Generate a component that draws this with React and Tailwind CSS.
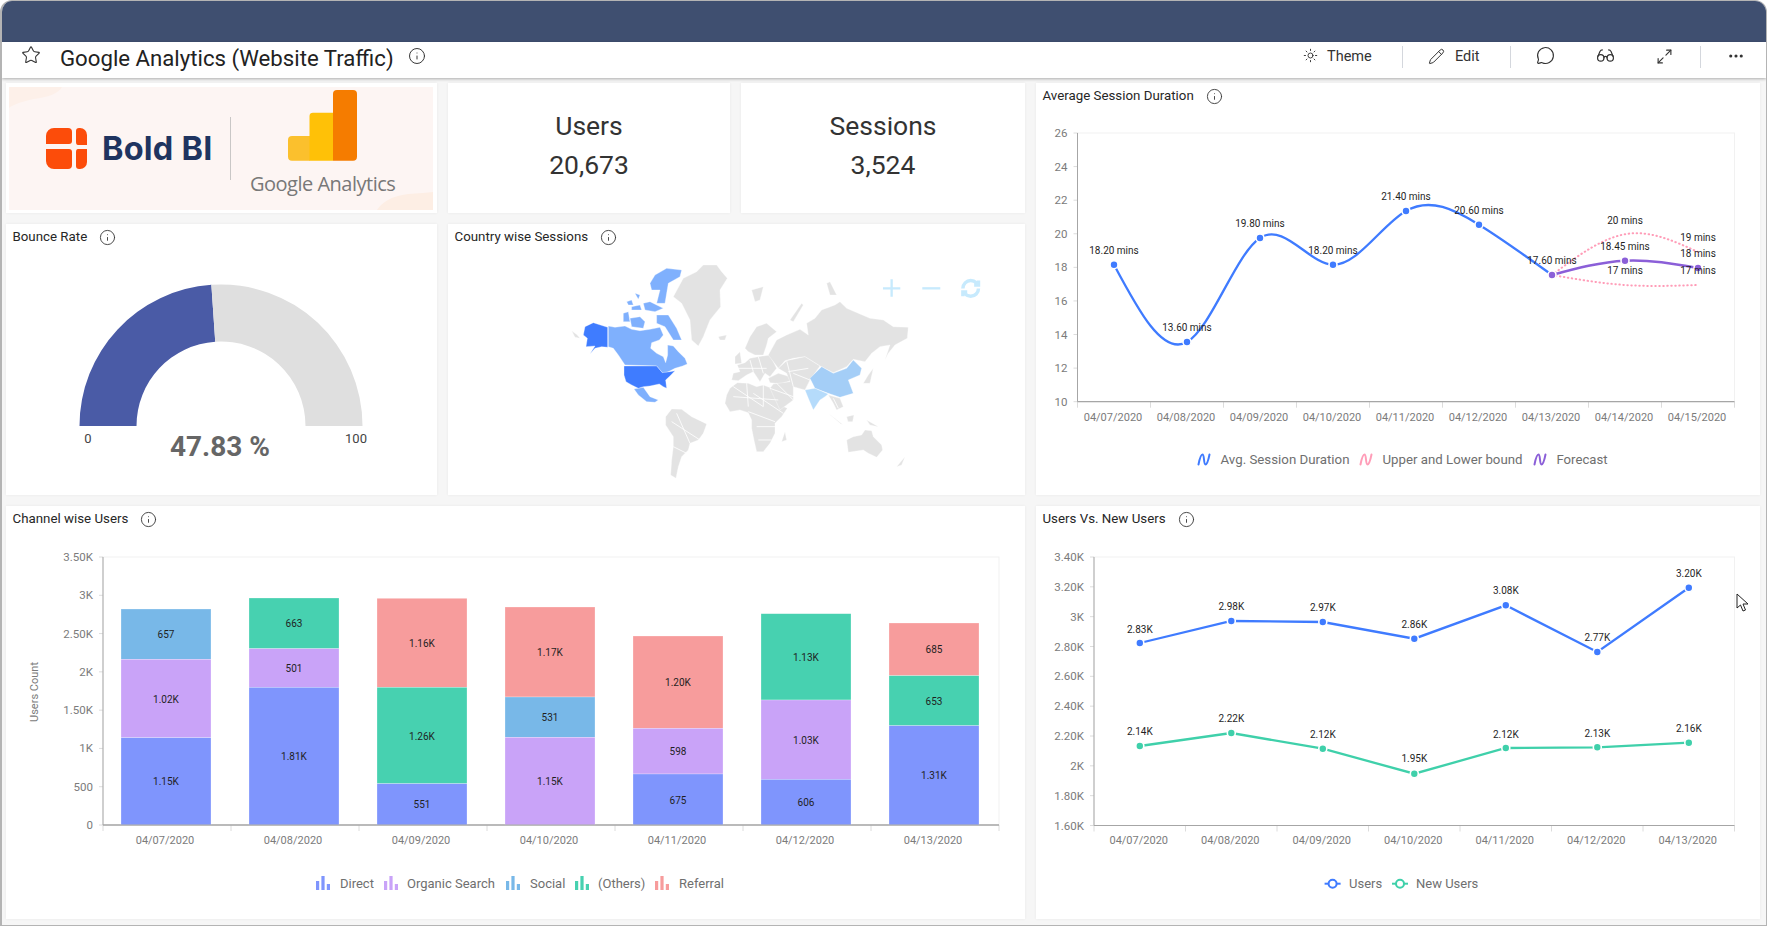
import React from "react";
import { Star, Info, Sun, Pencil, MessageCircle, Glasses, Maximize2, Ellipsis } from "lucide-react";

const AXIS = "#a6a6a6";
const FRAME = "#f1f1f1";
const TICK = "#dcdcdc";
const LABEL = "#7b7b7b";
const LEG = "#6f6f6f";
const BLUE = "#3f7bff";
const GREEN = "#3fd0aa";
const PURPLE = "#8b5fd8";
const PINK = "#ff9db8";
const C = { d: "#7f95fd", o: "#c9a3f8", s: "#78b8e8", t: "#47d1b0", r: "#f79c9c" };

function spline(pts) {
  const n = pts.length - 1;
  const xs = pts.map((p) => p[0]);
  const ys = pts.map((p) => p[1]);
  const h = [];
  for (let i = 0; i < n; i++) h.push(xs[i + 1] - xs[i]);
  const a = new Array(n + 1).fill(0);
  const b = new Array(n + 1).fill(1);
  const c = new Array(n + 1).fill(0);
  const d = new Array(n + 1).fill(0);
  for (let i = 1; i < n; i++) {
    a[i] = h[i - 1];
    b[i] = 2 * (h[i - 1] + h[i]);
    c[i] = h[i];
    d[i] = 6 * ((ys[i + 1] - ys[i]) / h[i] - (ys[i] - ys[i - 1]) / h[i - 1]);
  }
  for (let i = 1; i <= n; i++) {
    const m = a[i] / b[i - 1];
    b[i] -= m * c[i - 1];
    d[i] -= m * d[i - 1];
  }
  const M = new Array(n + 1).fill(0);
  for (let i = n - 1; i >= 0; i--) M[i] = (d[i] - c[i] * M[i + 1]) / b[i];
  let path = `M${xs[0]},${ys[0]}`;
  for (let i = 0; i < n; i++) {
    const c1 = ys[i] + (h[i] / 3) * ((ys[i + 1] - ys[i]) / h[i] - (h[i] * (2 * M[i] + M[i + 1])) / 6);
    const c2 = ys[i + 1] - (h[i] / 3) * ((ys[i + 1] - ys[i]) / h[i] + (h[i] * (M[i] + 2 * M[i + 1])) / 6);
    path += ` C${xs[i] + h[i] / 3},${c1} ${xs[i + 1] - h[i] / 3},${c2} ${xs[i + 1]},${ys[i + 1]}`;
  }
  return path;
}

function Card({ title, className = "", children }) {
  return (
    <div className={`bg-white shadow-[0_0_3px_rgba(0,0,0,0.06)] flex flex-col min-h-0 overflow-hidden ${className}`}>
      {title && (
        <div className="h-[26px] shrink-0 flex items-center pl-[6.5px] gap-[12px] text-[13.3px] text-[#262626]">
          <span>{title}</span>
          <Info size={17} strokeWidth={1.3} className="text-[#3a3a3a]" />
        </div>
      )}
      {children}
    </div>
  );
}

function ChartSvg({ x, y, w, h, children }) {
  return (
    <svg viewBox={`${x} ${y + 26} ${w} ${h - 26}`} width={w} height={h - 26} className="block" fontFamily="Roboto, sans-serif">
      {children}
    </svg>
  );
}

function Plot({ left, right, top, bottom, cols, yLabels }) {
  const step = (right - left) / cols;
  const ystep = (bottom - top) / (yLabels.length - 1);
  return (
    <g>
      <rect x={left} y={top} width={right - left} height={bottom - top} fill="none" stroke={FRAME} strokeWidth="1" />
      {yLabels.map((l, i) => (
        <g key={l}>
          <line x1={left - 4} x2={left} y1={top + i * ystep} y2={top + i * ystep} stroke={TICK} />
          <text x={left - 10} y={top + i * ystep + 4} textAnchor="end" fontSize="11.5" fill={LABEL}>{l}</text>
        </g>
      ))}
      {Array.from({ length: cols + 1 }).map((_, i) => (
        <line key={i} x1={left + i * step} x2={left + i * step} y1={bottom} y2={bottom + 6} stroke={TICK} />
      ))}
      <line x1={left} x2={left} y1={top} y2={bottom} stroke={AXIS} strokeWidth="1" />
      <line x1={left} x2={right} y1={bottom} y2={bottom} stroke={AXIS} strokeWidth="1.2" />
    </g>
  );
}

function XLabels({ dates, left, step, y, dx = -1 }) {
  return dates.map((d, i) => (
    <text key={d} x={left + step / 2 + i * step + dx} y={y} textAnchor="middle" fontSize="11" fill={LABEL}>{d}</text>
  ));
}

function Dot({ x, y, fill }) {
  return <circle cx={x} cy={y} r="4" fill={fill} stroke="#fff" strokeWidth="1.6" />;
}

function Lbl({ x, y, children }) {
  return <text x={x} y={y + 3.5} textAnchor="middle" fontSize="10" fill="#1f1f1f">{children}</text>;
}

function BarIcon({ x, y, fill }) {
  return (
    <g fill={fill}>
      <rect x={x} y={y + 5} width="3.2" height="9" />
      <rect x={x + 5.4} y={y} width="3.2" height="14" />
      <rect x={x + 10.8} y={y + 8} width="3.2" height="6" />
    </g>
  );
}

function Wave({ x, y, stroke }) {
  return (
    <path
      transform={`translate(${x},${y})`}
      d="M-5.5,5 C-4.5,0 -3.5,-5 -1.5,-5 C0.5,-5 -0.5,5 1.5,5 C3.5,5 4.5,0 5.5,-5"
      fill="none"
      stroke={stroke}
      strokeWidth="2"
      strokeLinecap="round"
    />
  );
}

function LineIcon({ x, y, stroke }) {
  return (
    <g>
      <line x1={x - 8} x2={x + 8} y1={y} y2={y} stroke={stroke} strokeWidth="2" />
      <circle cx={x} cy={y} r="4" fill="#fff" stroke={stroke} strokeWidth="2" />
    </g>
  );
}

function LogoCard() {
  return (
    <svg viewBox="6 83 431 130" width="431" height="130" className="block">
      <rect x="9" y="87" width="424" height="123" fill="#fdf5f3" />
      <path d="M9,87 H62 C58,94 48,97 34,99 C24,101 14,104 9,108 Z" fill="#fdf0e9" />
      <path d="M433,210 H377 C382,202 392,196 408,194 C418,193 428,193 433,192 Z" fill="#fdeee4" />
      <g fill="#fc4c0a">
        <path d="M46,136 a8,8 0 0 1 8,-8 h14 q4,0 4,4 v9 q0,3 -3,3 h-23 Z" />
        <path d="M79,128 h1 a7,7 0 0 1 7,7 v10 h-9 q-2,0 -2,-3 v-11 q0,-3 3,-3 Z" />
        <path d="M46,149 h23 q3,0 3,3 v13 q0,4 -4,4 h-14 a8,8 0 0 1 -8,-8 Z" />
        <path d="M78,149 h9 v13 a7,7 0 0 1 -7,7 h-1 q-3,0 -3,-3 v-14 q0,-3 2,-3 Z" />
      </g>
      <text x="102" y="160" fontFamily="Inter, sans-serif" fontWeight="700" fontSize="32.5" letterSpacing="0.2" fill="#1f3460">Bold BI</text>
      <line x1="230.5" x2="230.5" y1="117" y2="180" stroke="#c9c7c6" />
      <path d="M292,136 H310 V160.7 H292 a4,4 0 0 1 -4,-4 V140 a4,4 0 0 1 4,-4 Z" fill="#fbc02d" />
      <path d="M313,112.7 H333 V160.7 H309.5 V116 a3.5,3.5 0 0 1 3.5,-3.3 Z" fill="#ffc107" />
      <path d="M337,90 H353 a4,4 0 0 1 4,4 V156.7 a4,4 0 0 1 -4,4 H333 V94 a4,4 0 0 1 4,-4 Z" fill="#f57c00" />
      <text x="250" y="191" fontFamily="'Open Sans', sans-serif" fontSize="20" letterSpacing="-0.5" fill="#787878">Google Analytics</text>
    </svg>
  );
}

function Kpi({ label, value }) {
  return (
    <Card className="items-center justify-center">
      <div className="text-[26.5px] leading-[39px] text-[#333] text-center pb-[6px]">
        <div>{label}</div>
        <div>{value}</div>
      </div>
    </Card>
  );
}

function Gauge() {
  const cx = 221, cy = 426, R = 141.5, r = 84.5;
  const a = (47.83 / 100) * Math.PI;
  const ox = cx - R * Math.cos(a), oy = cy - R * Math.sin(a);
  const ix = cx - r * Math.cos(a), iy = cy - r * Math.sin(a);
  return (
    <ChartSvg x={6} y={224} w={431} h={271}>
      <path d={`M${cx - R},${cy} A${R},${R} 0 0 1 ${ox},${oy} L${ix},${iy} A${r},${r} 0 0 0 ${cx - r},${cy} Z`} fill="#4a5ba6" />
      <path d={`M${ox},${oy} A${R},${R} 0 0 1 ${cx + R},${cy} L${cx + r},${cy} A${r},${r} 0 0 0 ${ix},${iy} Z`} fill="#dfdfdf" />
      <text x="88" y="443" textAnchor="middle" fontSize="13" fill="#444">0</text>
      <text x="356" y="443" textAnchor="middle" fontSize="13" fill="#444">100</text>
      <text x="220" y="456" textAnchor="middle" fontSize="28" fontWeight="700" fill="#666">47.83 %</text>
    </ChartSvg>
  );
}

const GREY = [
  "M590,95 L610,75 L650,75 L665,95 L682,115 L660,150 L662,200 L630,240 L610,290 L595,318 L575,300 L570,240 L545,190 L520,170 L550,115 Z",
  "M215,272 L232,285 L240,295 L225,292 Z",
  "M497,530 L515,507 L545,508 L575,530 L600,542 L620,552 L610,580 L595,600 L570,610 L565,630 L545,650 L535,680 L528,715 L512,705 L515,660 L520,620 L520,590 L497,555 Z",
  "M680,465 L690,445 L712,428 L745,430 L770,440 L790,435 L815,445 L825,470 L840,495 L862,505 L845,530 L825,550 L825,580 L810,610 L790,635 L770,635 L762,600 L755,565 L755,540 L745,518 L720,510 L690,515 L675,490 Z",
  "M855,575 L860,600 L845,605 Z",
  "M695,420 L700,400 L720,395 L712,375 L735,368 L750,355 L775,350 L810,345 L830,385 L810,410 L795,400 L780,425 L760,395 L740,405 L715,422 Z",
  "M735,325 L750,290 L770,260 L800,250 L830,275 L805,295 L800,315 L790,345 L765,345 L745,335 Z",
  "M655,290 L680,285 L675,300 L660,300 Z",
  "M705,350 L720,335 L725,370 L705,372 Z",
  "M805,345 L830,300 L860,285 L900,268 L925,285 L920,250 L945,235 L965,210 L1005,195 L1020,185 L1040,205 L1080,222 L1110,235 L1150,240 L1180,260 L1225,262 L1222,295 L1185,315 L1165,340 L1155,360 L1170,315 L1140,320 L1115,340 L1095,365 L1060,358 L1040,380 L1000,398 L960,378 L915,350 L880,355 L855,362 L835,385 Z",
  "M870,240 L905,190 L910,195 L880,245 Z",
  "M755,150 L790,140 L780,180 L765,185 Z",
  "M980,130 L990,125 L1010,165 L990,165 Z",
  "M805,415 L835,400 L870,410 L880,420 L840,432 L810,428 Z",
  "M835,385 L860,362 L915,350 L960,378 L930,420 L915,450 L880,440 L880,480 L840,510 L810,445 L820,432 L870,425 L860,400 Z",
  "M985,465 L1020,475 L1030,500 L1010,510 L1000,490 Z",
  "M1105,405 L1120,385 L1110,430 L1090,430 Z",
  "M985,520 L1030,555 L1020,550 Z",
  "M1040,530 L1062,525 L1058,545 L1044,545 Z",
  "M1100,540 L1135,560 L1110,555 Z",
  "M1040,600 L1060,590 L1085,585 L1095,570 L1115,572 L1120,590 L1145,615 L1148,630 L1130,652 L1105,640 L1090,630 L1045,637 Z",
  "M1190,680 L1215,650 L1205,675 Z",
];
const MID = [
  "M465,105 L500,85 L545,90 L540,110 L505,130 L495,190 L470,190 L480,150 L455,150 L450,130 Z",
  "M380,185 L395,180 L400,195 L385,195 Z",
  "M395,200 L420,195 L425,210 L395,210 Z",
  "M370,220 L385,215 L390,245 L370,245 Z",
  "M390,235 L420,230 L435,245 L430,265 L395,260 Z",
  "M430,190 L450,185 L490,205 L465,215 L435,210 Z",
  "M470,225 L505,225 L530,265 L545,300 L520,300 L495,260 L470,250 Z",
  "M405,160 L420,165 L415,178 Z",
  "M325,258 L345,262 L375,258 L395,268 L420,272 L450,268 L480,262 L490,285 L478,300 L455,308 L452,325 L470,340 L490,350 L497,368 L503,345 L503,315 L520,318 L535,335 L555,355 L562,372 L548,378 L525,385 L505,395 L490,402 L470,378 L375,375 L355,345 L340,325 L325,320 Z",
  "M402,447 L430,442 L450,470 L475,480 L465,487 L440,485 L415,465 Z",
];
const BORDERS = [
  "M740,430 L745,500", "M790,435 L790,500", "M700,470 L835,480", "M745,515 L825,545", "M770,560 L825,560", "M775,600 L815,600",
  "M515,545 L600,600", "M530,520 L570,610", "M520,620 L560,640", "M750,360 L760,395", "M775,350 L790,400", "M715,385 L800,385",
  "M860,362 L880,440", "M880,400 L930,420", "M830,430 L880,480", "M810,445 L880,470", "M700,440 L790,500", "M760,460 L850,520",
  "M1000,475 L1015,505", "M865,395 L925,385",
];

function WorldMap() {
  return (
    <ChartSvg x={448} y={224} w={577} h={271}>
      <g transform="translate(500,240) scale(0.3333)">
        <g fill="#e3e3e3" stroke="#fff" strokeWidth="1">
          {GREY.map((d) => <path key={d} d={d} />)}
        </g>
        <g fill="none" stroke="#fff" strokeWidth="2.5">
          {BORDERS.map((d) => <path key={d} d={d} />)}
        </g>
        <g fill="#7fb0fd" stroke="#fff" strokeWidth="1">
          {MID.map((d) => <path key={d} d={d} />)}
        </g>
        <g fill="#3f7cff" stroke="#fff" strokeWidth="1">
          <path d="M255,260 L280,248 L323,262 L323,322 L305,320 L285,325 L270,342 L285,318 L258,320 L262,295 L250,285 Z" />
          <path d="M372,378 L470,378 L487,398 L510,395 L525,392 L510,408 L497,420 L500,445 L490,440 L478,432 L450,438 L430,440 L415,445 L395,435 L378,425 L372,405 Z" />
        </g>
        <path d="M930,415 L965,380 L1000,400 L1040,385 L1060,360 L1085,385 L1080,405 L1045,420 L1060,460 L1020,472 L985,460 L945,445 Z" fill="#a4cef7" stroke="#fff" />
        <path d="M915,450 L945,445 L985,462 L975,470 L960,480 L940,510 L925,475 Z" fill="#b5dbfb" stroke="#fff" />
        <g stroke="#c7eafd" strokeWidth="7" fill="none">
          <path d="M1175,118 V170 M1149,145 H1201" />
          <path d="M1267,145 H1321" />
        </g>
        <g transform="translate(1381,114) scale(2.6)" stroke="#c7eafd" strokeWidth="4" fill="none">
          <path d="M3 12a9 9 0 0 1 9-9 9.75 9.75 0 0 1 6.74 2.74L21 8" />
          <path d="M21 3v5h-5" />
          <path d="M21 12a9 9 0 0 1-9 9 9.75 9.75 0 0 1-6.74-2.74L3 16" />
          <path d="M8 16H3v5" />
        </g>
      </g>
    </ChartSvg>
  );
}

const DATES9 = ["04/07/2020", "04/08/2020", "04/09/2020", "04/10/2020", "04/11/2020", "04/12/2020", "04/13/2020", "04/14/2020", "04/15/2020"];
const DATES7 = DATES9.slice(0, 7);

function SessionChart() {
  const main = [[1114, 264.7], [1187, 342], [1260, 238], [1333, 264.7], [1406, 211], [1479, 224.7], [1552, 275]];
  const fc = [[1552, 275], [1625, 260.7], [1698, 268]];
  const up = [[1552, 275], [1630, 233.5], [1698, 252]];
  const lo = [[1552, 275], [1625, 285], [1698, 285]];
  const labels = [
    [1114, 250.7, "18.20 mins"], [1187, 327.3, "13.60 mins"], [1260, 223.7, "19.80 mins"], [1333, 250.7, "18.20 mins"],
    [1406, 196.7, "21.40 mins"], [1479, 210, "20.60 mins"], [1552, 260.3, "17.60 mins"], [1625, 220, "20 mins"],
    [1625, 246, "18.45 mins"], [1625, 270, "17 mins"], [1698, 237, "19 mins"], [1698, 253.7, "18 mins"], [1698, 270, "17 mins"],
  ];
  return (
    <ChartSvg x={1036} y={83} w={724} h={412}>
      <Plot left={1077.5} right={1734.5} top={133} bottom={401.7} cols={9} yLabels={["26", "24", "22", "20", "18", "16", "14", "12", "10"]} />
      <XLabels dates={DATES9} left={1077.5} step={73} y={420.5} />
      <path d={spline(up)} fill="none" stroke={PINK} strokeWidth="2" strokeDasharray="0.5 3.5" strokeLinecap="round" />
      <path d={spline(lo)} fill="none" stroke={PINK} strokeWidth="2" strokeDasharray="0.5 3.5" strokeLinecap="round" />
      <path d={spline(main)} fill="none" stroke={BLUE} strokeWidth="2.3" />
      <path d={spline(fc)} fill="none" stroke={PURPLE} strokeWidth="2.6" />
      {main.slice(0, 6).map((p) => <Dot key={p[0]} x={p[0]} y={p[1]} fill={BLUE} />)}
      {fc.map((p) => <Dot key={p[0]} x={p[0]} y={p[1]} fill={PURPLE} />)}
      {labels.map((l, i) => <Lbl key={i} x={l[0]} y={l[1]}>{l[2]}</Lbl>)}
      <Wave x={1204} y={459.5} stroke={BLUE} />
      <text x="1220.5" y="464" fontSize="13" fill={LEG} textLength="129" lengthAdjust="spacingAndGlyphs">Avg. Session Duration</text>
      <Wave x={1366} y={459.5} stroke={PINK} />
      <text x="1382.5" y="464" fontSize="13" fill={LEG} textLength="140" lengthAdjust="spacingAndGlyphs">Upper and Lower bound</text>
      <Wave x={1540} y={459.5} stroke={PURPLE} />
      <text x="1556.5" y="464" fontSize="13" fill={LEG} textLength="51" lengthAdjust="spacingAndGlyphs">Forecast</text>
    </ChartSvg>
  );
}

const BARS = [
  { c: 166, s: [[609, 659.3, C.s, "657"], [659.3, 737.7, C.o, "1.02K"], [737.7, 825, C.d, "1.15K"]] },
  { c: 294, s: [[598, 648.7, C.t, "663"], [648.7, 687.3, C.o, "501"], [687.3, 825, C.d, "1.81K"]] },
  { c: 422, s: [[598.3, 687.3, C.r, "1.16K"], [687.3, 783.7, C.t, "1.26K"], [783.7, 825, C.d, "551"]] },
  { c: 550, s: [[607, 697, C.r, "1.17K"], [697, 737.3, C.s, "531"], [737.3, 825, C.o, "1.15K"]] },
  { c: 678, s: [[636, 728.3, C.r, "1.20K"], [728.3, 774, C.o, "598"], [774, 825, C.d, "675"]] },
  { c: 806, s: [[613.7, 700, C.t, "1.13K"], [700, 779.3, C.o, "1.03K"], [779.3, 825, C.d, "606"]] },
  { c: 934, s: [[623, 675.7, C.r, "685"], [675.7, 725.7, C.t, "653"], [725.7, 825, C.d, "1.31K"]] },
];

function ChannelChart() {
  return (
    <ChartSvg x={6} y={506} w={1019} h={413}>
      <Plot left={103} right={999} top={557} bottom={825} cols={7} yLabels={["3.50K", "3K", "2.50K", "2K", "1.50K", "1K", "500", "0"]} />
      <XLabels dates={DATES7} left={103} step={128} y={844} dx={-2} />
      <text transform="translate(38,692) rotate(-90)" textAnchor="middle" fontSize="11" fill={LABEL}>Users Count</text>
      {BARS.map((b) => (
        <g key={b.c}>
          {b.s.map((s) => (
            <g key={s[3] + s[0]}>
              <rect x={b.c - 45} y={s[0]} width="90" height={s[1] - s[0]} fill={s[2]} stroke="#fff" strokeOpacity="0.5" strokeWidth="0.5" />
              <Lbl x={b.c} y={(s[0] + s[1]) / 2 + 0.5}>{s[3]}</Lbl>
            </g>
          ))}
        </g>
      ))}
      <line x1="103" x2="999" y1="825" y2="825" stroke={AXIS} strokeWidth="1.2" />
      <BarIcon x={316} y={876} fill={C.d} />
      <text x="340" y="888" fontSize="13" fill={LEG}>Direct</text>
      <BarIcon x={384} y={876} fill={C.o} />
      <text x="407" y="888" fontSize="13" fill={LEG}>Organic Search</text>
      <BarIcon x={506} y={876} fill={C.s} />
      <text x="530" y="888" fontSize="13" fill={LEG}>Social</text>
      <BarIcon x={575} y={876} fill={C.t} />
      <text x="598" y="888" fontSize="13" fill={LEG}>(Others)</text>
      <BarIcon x={655} y={876} fill={C.r} />
      <text x="679" y="888" fontSize="13" fill={LEG}>Referral</text>
    </ChartSvg>
  );
}

function UsersChart() {
  const xs = [1139.8, 1231.3, 1322.8, 1414.3, 1505.8, 1597.3, 1688.8];
  const u = [643, 621, 622, 638.7, 605.3, 652, 587.7];
  const ul = [[629, "2.83K"], [606.7, "2.98K"], [607.3, "2.97K"], [624.3, "2.86K"], [590.7, "3.08K"], [637.3, "2.77K"], [573.3, "3.20K"]];
  const n = [746, 733, 748.7, 773.7, 748, 747.3, 742.7];
  const nl = [[731.3, "2.14K"], [718.3, "2.22K"], [734.3, "2.12K"], [758.7, "1.95K"], [734, "2.12K"], [733, "2.13K"], [728.3, "2.16K"]];
  return (
    <ChartSvg x={1036} y={506} w={724} h={413}>
      <Plot left={1094} right={1734.5} top={557} bottom={825.5} cols={7} yLabels={["3.40K", "3.20K", "3K", "2.80K", "2.60K", "2.40K", "2.20K", "2K", "1.80K", "1.60K"]} />
      <XLabels dates={DATES7} left={1094} step={91.5} y={844} />
      <polyline points={xs.map((x, i) => `${x},${u[i]}`).join(" ")} fill="none" stroke={BLUE} strokeWidth="2.3" />
      <polyline points={xs.map((x, i) => `${x},${n[i]}`).join(" ")} fill="none" stroke={GREEN} strokeWidth="2.3" />
      {xs.map((x, i) => <Dot key={x} x={x} y={u[i]} fill={BLUE} />)}
      {xs.map((x, i) => <Dot key={x} x={x} y={n[i]} fill={GREEN} />)}
      {xs.map((x, i) => <Lbl key={x} x={x} y={ul[i][0]}>{ul[i][1]}</Lbl>)}
      {xs.map((x, i) => <Lbl key={x} x={x} y={nl[i][0]}>{nl[i][1]}</Lbl>)}
      <LineIcon x={1332.6} y={883.7} stroke={BLUE} />
      <text x="1349" y="888" fontSize="13" fill={LEG}>Users</text>
      <LineIcon x={1400} y={883.7} stroke={GREEN} />
      <text x="1416" y="888" fontSize="13" fill={LEG}>New Users</text>
    </ChartSvg>
  );
}

function Sep({ className = "" }) {
  return <div className={`w-px h-[22px] bg-[#d4d7dd] ${className}`} />;
}

export default function App() {
  return (
    <div className="relative w-[1768px] h-[926px] overflow-hidden bg-white [font-family:Roboto,sans-serif]">
      <div className="w-[1767px] h-[926px] flex flex-col rounded-t-[12px] overflow-hidden border border-l-2 border-[#b4b4b4] bg-[#f6f6f6]">
        <div className="h-[41px] shrink-0 bg-[#3f4f70]" />
        <div className="h-[36px] shrink-0 bg-white flex items-center pl-[19px] pr-[21px] shadow-[0_1px_3px_rgba(0,0,0,0.3)] relative">
          <Star size={20} strokeWidth={1.3} className="text-[#333] -mt-[11px]" />
          <span className="ml-[19px] text-[22.2px] leading-[28px] text-[#222] -mt-[4px]">Google Analytics (Website Traffic)</span>
          <Info size={18} strokeWidth={1.3} className="ml-[14px] text-[#333] -mt-[9px]" />
          <div className="ml-auto flex items-center text-[#333] -mt-[6px]">
            <Sun size={15} strokeWidth={1.5} className="-mt-[3px] ml-[1px]" />
            <span className="ml-[9px] w-[44px] text-[14.5px]">Theme</span>
            <Sep className="ml-[31px]" />
            <Pencil size={17} strokeWidth={1.4} className="ml-[25px] -mt-[2px]" />
            <span className="ml-[10px] w-[26px] text-[14.5px]">Edit</span>
            <Sep className="ml-[29px]" />
            <MessageCircle size={19} strokeWidth={1.4} className="ml-[25px] -mt-[3px]" />
            <Glasses size={19} strokeWidth={1.5} className="ml-[41px] -mt-[3px]" />
            <Maximize2 size={17} strokeWidth={1.6} className="ml-[41px] -mt-[2px]" />
            <Sep className="ml-[27px]" />
            <Ellipsis size={18} strokeWidth={2.2} className="ml-[26px] -mt-[2px]" />
          </div>
        </div>
        <div className="flex-1 min-h-0 grid grid-cols-[431px_282px_284px_724px] grid-rows-[130px_271px_413px] gap-[11px] pl-[4px] pt-[5px]">
          <Card><LogoCard /></Card>
          <Kpi label="Users" value="20,673" />
          <Kpi label="Sessions" value="3,524" />
          <Card title="Average Session Duration" className="row-span-2"><SessionChart /></Card>
          <Card title="Bounce Rate"><Gauge /></Card>
          <Card title="Country wise Sessions" className="col-span-2"><WorldMap /></Card>
          <Card title="Channel wise Users" className="col-span-3"><ChannelChart /></Card>
          <Card title="Users Vs. New Users"><UsersChart /></Card>
        </div>
      </div>
      <svg className="absolute left-[1736px] top-[593px]" width="14" height="20" viewBox="0 0 14 20">
        <path d="M1,1 L1,15 L4.5,12 L7,18 L9.5,17 L7,11 L12,11 Z" fill="#fff" stroke="#222" strokeWidth="1" />
      </svg>
    </div>
  );
}
